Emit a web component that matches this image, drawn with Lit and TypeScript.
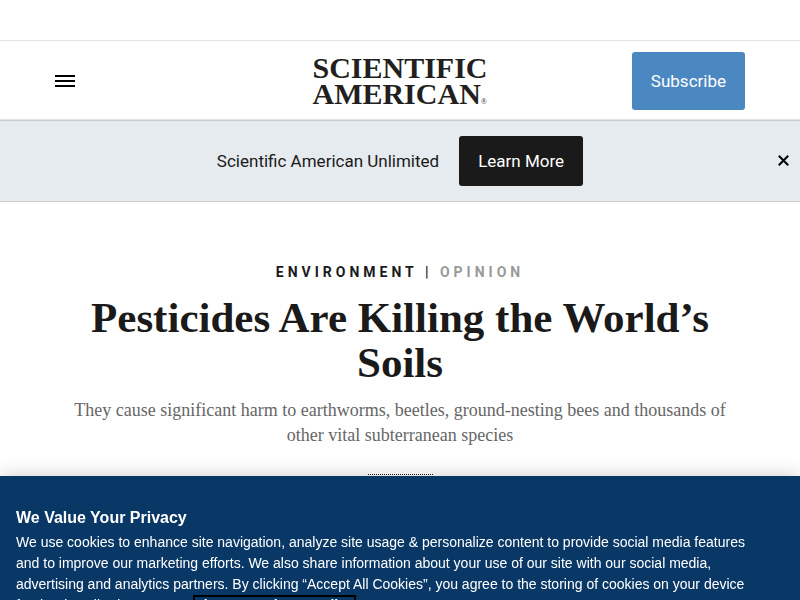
import { LitElement, html, css } from "lit";
import { customElement } from "lit/decorators.js";

@customElement("app-root")
export class AppRoot extends LitElement {
  static styles = css`
    :host {
      display: block;
      min-height: 100vh;
      background: #fff;
      color: #1a1a1a;
      font-family: Roboto, "Liberation Sans", sans-serif;
      font-size: 17px;
      line-height: 18px;
    }
    * {
      box-sizing: border-box;
    }
    button {
      font: inherit;
      border: 0;
      padding: 0;
      background: none;
      cursor: pointer;
    }
    a {
      color: inherit;
      text-decoration: none;
    }
    .masthead {
      margin-top: 40px;
      height: 80px;
      padding: 2px 55px 0;
      display: grid;
      grid-template-columns: 1fr auto 1fr;
      align-items: center;
      border-top: 1px solid #e2e2e2;
      border-bottom: 1px solid #e2e2e2;
    }
    .menu {
      justify-self: start;
      display: flex;
    }
    .logo {
      display: grid;
      font-family: "Liberation Serif", serif;
      font-weight: 700;
      font-size: 30px;
      line-height: 26px;
      color: #231f20;
    }
    .mark {
      font-size: 8px;
      line-height: 8px;
      font-weight: 400;
    }
    .subscribe {
      justify-self: end;
      padding: 20px 19px;
      border-radius: 3px;
      background: #4b88c1;
      color: #fff;
    }
    .promo {
      display: grid;
      grid-template-columns: 1fr auto 1fr;
      align-items: center;
      height: 82px;
      background: #e6ebef;
      border-top: 1px solid #ccc;
      border-bottom: 1px solid #ccc;
    }
    .offer {
      grid-column: 2;
      display: flex;
      align-items: center;
      gap: 20px;
    }
    .learn {
      padding: 16px 19px;
      border-radius: 3px;
      background: #1a1a1a;
      color: #fff;
    }
    .close {
      justify-self: end;
      display: flex;
      padding: 11px 11px 12px;
    }
    .article {
      max-width: 700px;
      margin: 0 auto;
      padding: 60px 20px 0;
      text-align: center;
    }
    .topic {
      margin: 0;
      font-size: 14px;
      line-height: 20px;
      font-weight: 700;
      letter-spacing: 4px;
      text-transform: uppercase;
    }
    .kind {
      color: #999;
    }
    h1 {
      margin: 13px 0 0;
      font-family: "Liberation Serif", serif;
      font-weight: 700;
      font-size: 43px;
      line-height: 45px;
    }
    .dek {
      margin: 13px 0 0;
      font-family: "Liberation Serif", serif;
      font-size: 18px;
      line-height: 25px;
      color: #666;
    }
    .rule {
      width: 65px;
      margin: 26px auto 0;
      border: 0;
      border-top: 1px dotted #1a1a1a;
    }
    .privacy {
      position: fixed;
      left: 0;
      right: 0;
      bottom: 0;
      height: 124px;
      overflow: hidden;
      padding: 30px 16px 0;
      background: #0a3866;
      color: #fff;
      font-family: "Liberation Sans", sans-serif;
      box-shadow: 0 0 18px rgba(0, 0, 0, 0.2);
    }
    h2 {
      margin: 0 0 2px;
      font-size: 16px;
      line-height: 24px;
    }
    .notice {
      max-width: 740px;
      margin: 0;
      font-size: 14px;
      line-height: 21px;
    }
    .policy {
      font-weight: 700;
      margin-left: 5px;
      outline: 2px solid #000;
      text-decoration: underline;
    }
  `;

  render() {
    return html`
      <header class="masthead">
        <button class="menu" aria-label="Menu">
          <svg width="20" height="12" viewBox="0 0 20 12" aria-hidden="true">
            <path d="M0 0h20v2H0zM0 5h20v2H0zM0 10h20v2H0z" />
          </svg>
        </button>
        <a class="logo" href="#">
          <span>SCIENTIFIC</span>
          <span>AMERICAN<span class="mark">®</span></span>
        </a>
        <a class="subscribe" href="#">Subscribe</a>
      </header>
      <aside class="promo">
        <div class="offer">
          <span>Scientific American Unlimited</span>
          <a class="learn" href="#">Learn More</a>
        </div>
        <button class="close" aria-label="Close">
          <svg width="11" height="11" viewBox="0 0 11 11" aria-hidden="true">
            <path d="M.8.8l9.4 9.4M10.2.8L.8 10.2" stroke="#000" stroke-width="2" />
          </svg>
        </button>
      </aside>
      <main class="article">
        <p class="topic">
          <a href="#">Environment</a> | <span class="kind">Opinion</span>
        </p>
        <h1>Pesticides Are Killing the World’s Soils</h1>
        <p class="dek">
          They cause significant harm to earthworms, beetles, ground-nesting
          bees and thousands of other vital subterranean species
        </p>
        <hr class="rule" />
      </main>
      <section class="privacy" aria-labelledby="privacy-title">
        <h2 id="privacy-title">We Value Your Privacy</h2>
        <p class="notice">
          We use cookies to enhance site navigation, analyze site usage &amp;
          personalize content to provide social media features and to improve
          our marketing efforts. We also share information about your use of our
          site with our social media, advertising and analytics partners. By
          clicking “Accept All Cookies”, you agree to the storing of cookies on
          your device for the described purposes.
          <a class="policy" href="#">View Our Privacy Policy</a>
        </p>
      </section>
    `;
  }
}
